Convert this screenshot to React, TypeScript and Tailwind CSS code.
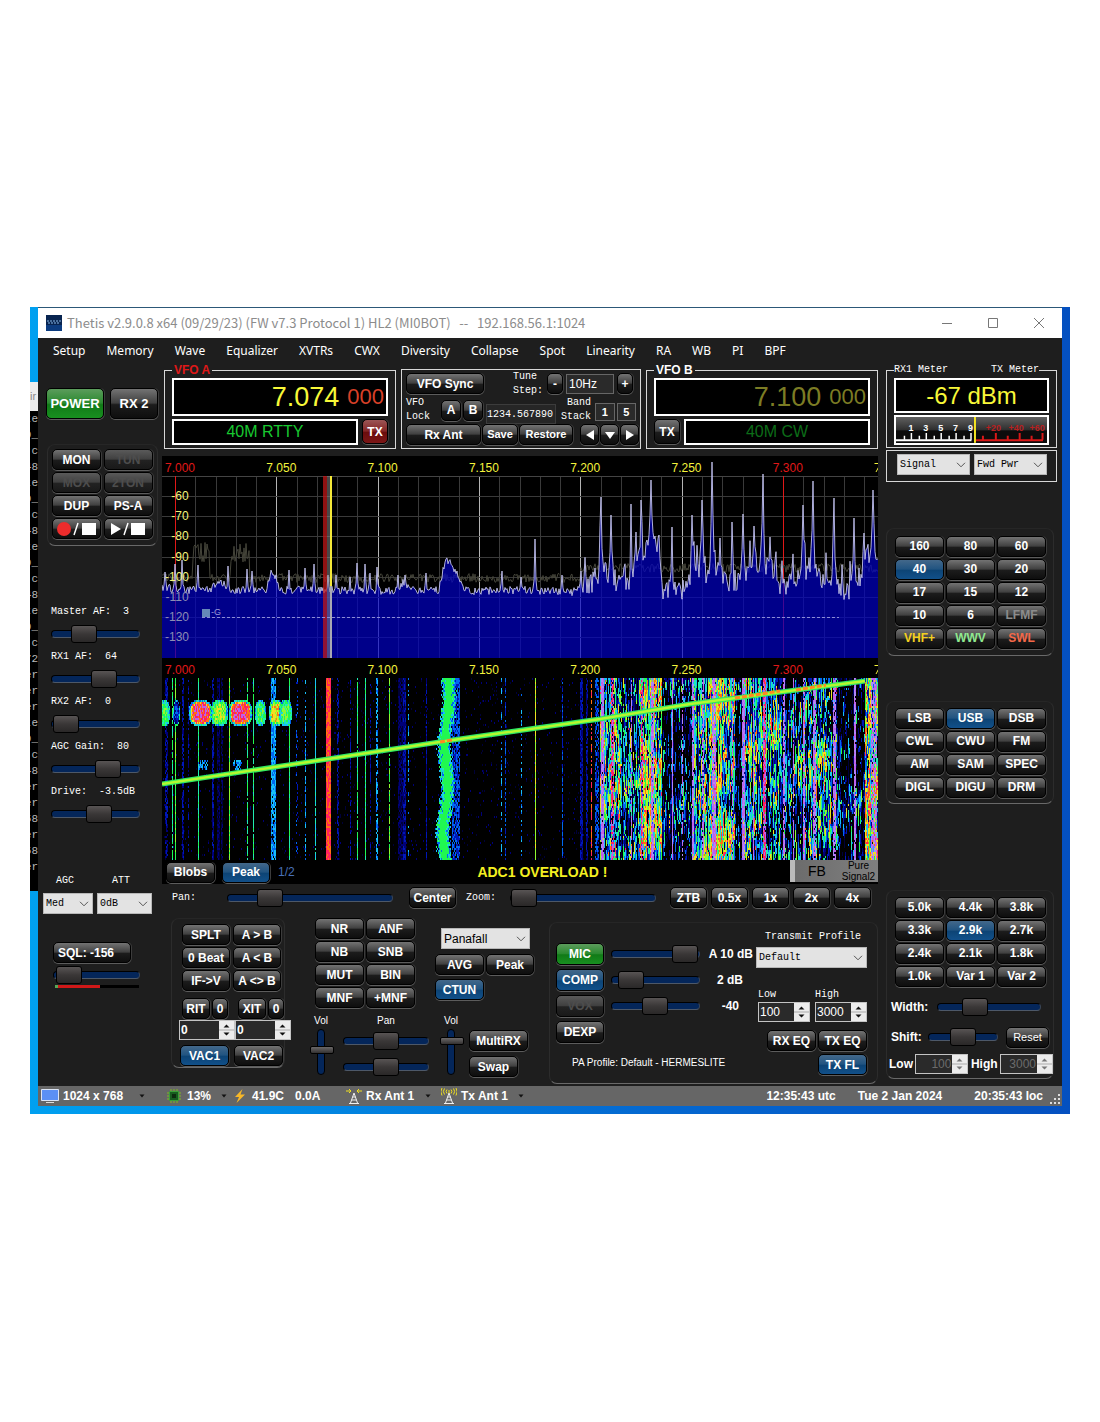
import { ReactNode } from 'react';
import { clsx } from 'clsx';

const tones = {
    dark: 'bg-[linear-gradient(#737373,#404040_48%,#1c1c1c_54%,#0e0e0e)] text-white',
    blue: 'bg-[linear-gradient(#43688a,#215481_48%,#0d4475_54%,#11508a)] text-white',
    green: 'bg-[linear-gradient(#5c9c5c,#2b8a30_48%,#117a17_54%,#189020)] text-white',
    red: 'bg-[linear-gradient(#9c5656,#842626_48%,#6b0d0d_54%,#7c1616)] text-white',
    off: 'bg-[linear-gradient(#5a5a5a,#404040_48%,#222222_54%,#191919)] text-[#4d4d4d]',
};

interface BtnProps {
    children: ReactNode;
    tone?: keyof typeof tones;
    className?: string;
    label?: string;
}

function Btn({ children, tone = 'dark', className = 'w-[49px]', label }: BtnProps) {
    return (
        <button
            type="button"
            aria-label={label}
            className={clsx(
                'flex h-[21px] shrink-0 items-center justify-center rounded-[5px] border border-black font-bold whitespace-nowrap shadow-[0_1px_0_#5c5c5c,1px_0_0_#3c3c3c]',
                tones[tone],
                className,
            )}
        >
            {children}
        </button>
    );
}

interface SliderProps {
    label: string;
    value: number;
    className?: string;
}

function Slider({ label, value, className = 'w-[89px]' }: SliderProps) {
    return (
        <input
            type="range"
            aria-label={label}
            defaultValue={value}
            className={clsx(
                'h-5 appearance-none bg-transparent [&::-webkit-slider-runnable-track]:h-2 [&::-webkit-slider-runnable-track]:rounded-full [&::-webkit-slider-runnable-track]:border [&::-webkit-slider-runnable-track]:border-t-black [&::-webkit-slider-runnable-track]:border-r-[#3a4454] [&::-webkit-slider-runnable-track]:border-b-[#4d5868] [&::-webkit-slider-runnable-track]:border-l-black [&::-webkit-slider-runnable-track]:bg-[#04265a]',
                '[&::-webkit-slider-thumb]:-mt-1.5 [&::-webkit-slider-thumb]:h-[18px] [&::-webkit-slider-thumb]:w-[26px] [&::-webkit-slider-thumb]:appearance-none [&::-webkit-slider-thumb]:rounded-[3px] [&::-webkit-slider-thumb]:border [&::-webkit-slider-thumb]:border-black [&::-webkit-slider-thumb]:bg-[linear-gradient(#585454,#3a3737_50%,#2a2828)]',
                className,
            )}
        />
    );
}

function VSlider({ label, value }: SliderProps) {
    return (
        <input
            type="range"
            aria-label={label}
            defaultValue={value}
            className="h-[46px] w-6 appearance-none bg-transparent [direction:rtl] [writing-mode:vertical-lr] [&::-webkit-slider-runnable-track]:w-2 [&::-webkit-slider-runnable-track]:rounded-full [&::-webkit-slider-runnable-track]:border [&::-webkit-slider-runnable-track]:border-black [&::-webkit-slider-runnable-track]:bg-[#04265a] [&::-webkit-slider-thumb]:-ml-2 [&::-webkit-slider-thumb]:h-2 [&::-webkit-slider-thumb]:w-6 [&::-webkit-slider-thumb]:appearance-none [&::-webkit-slider-thumb]:rounded-[2px] [&::-webkit-slider-thumb]:border [&::-webkit-slider-thumb]:border-black [&::-webkit-slider-thumb]:bg-[linear-gradient(#6b6868,#333131)]"
        />
    );
}

interface PickerProps {
    value: string;
    label?: string;
    id?: string;
    className?: string;
}

function Picker({ value, label, id, className }: PickerProps) {
    return (
        <div className={clsx('relative h-[21px]', className)}>
            <select
                id={id}
                aria-label={label}
                className="h-full w-full appearance-none border border-[#b8b8b8] bg-[#e3e3e3] pl-0.5 text-black"
            >
                <option>{value}</option>
            </select>
            <svg
                viewBox="0 0 10 6"
                className="pointer-events-none absolute top-2 right-1 h-1.5 w-2.5"
            >
                <path d="M1 .8 5 4.8 9 .8" fill="none" stroke="#555" />
            </svg>
        </div>
    );
}

interface SpinProps {
    label: string;
    value: string;
    className?: string;
    inputClass?: string;
    dim?: boolean;
}

function Spin({ label, value, className, inputClass, dim }: SpinProps) {
    return (
        <div className={clsx('flex h-5 border border-[#c4c4c4] bg-[#2a2a2a]', className)}>
            <input
                aria-label={label}
                defaultValue={value}
                className={clsx('w-full min-w-0 bg-transparent px-px', inputClass)}
            />
            <svg viewBox="0 0 15 18" className="h-full w-[15px] shrink-0 bg-[#ececec]">
                <path d="M0 9H15" stroke="#aaa" />
                <path
                    d="M4.500 6.500h6L7.500 3.500zM4.500 11.500h6L7.500 14.500z"
                    fill={dim ? '#777' : '#111'}
                />
            </svg>
        </div>
    );
}

function Panel({ children, className }: { children: ReactNode; className?: string }) {
    return (
        <div
            className={clsx(
                'rounded-lg border border-t-[#262626] border-r-[#2c2c2c] border-b-[#696969] border-l-[#2c2c2c]',
                className,
            )}
        >
            {children}
        </div>
    );
}

// ---- spectrum and waterfall -------------------------------------------------

function makeRandom(seed: number) {
    let s = seed;
    return () => {
        s = (s * 1664525 + 1013904223) % 4294967296;
        return s / 4294967296;
    };
}

function lerpTable(table: number[][], x: number) {
    for (let i = 1; i < table.length; i++) {
        const [x0, y0] = table[i - 1];
        const [x1, y1] = table[i];
        if (x <= x1) return y0 + ((y1 - y0) * (x - x0)) / (x1 - x0);
    }
    return table[table.length - 1][1];
}

// noise floor: x, y
const floor = [
    [0, 131], [20, 134], [48, 133], [53, 128], [62, 128], [66, 134], [104, 134], [108, 120],
    [110, 115], [113, 120], [119, 134], [236, 135], [240, 127], [248, 130], [254, 135], [277, 134],
    [281, 114], [284, 104], [287, 106], [294, 116], [300, 130], [308, 135], [370, 134], [410, 136],
    [420, 130], [432, 126], [438, 112], [448, 118], [458, 128], [472, 120], [480, 104], [490, 98],
    [498, 108], [501, 134], [526, 134], [532, 112], [546, 118], [552, 100], [556, 118], [572, 132],
    [580, 118], [600, 106], [614, 116], [621, 135], [634, 120], [650, 108], [660, 124], [674, 130],
    [684, 136], [698, 120], [704, 98], [716, 96],
];

// carriers: x, top y, width
const carriers = [
    [3, 116, 1], [13, 108, 1], [20, 104, 1], [36, 109, 1], [66, 110, 1], [85, 113, 1], [90, 115, 1],
    [127, 114, 1], [143, 112, 1], [152, 108, 1], [166, 119, 1], [174, 119, 1], [188, 121, 1],
    [195, 107, 1], [203, 108, 1], [208, 117, 1], [215, 111, 1], [236, 119, 1], [243, 119, 1],
    [264, 117, 1], [340, 115, 1], [359, 121, 1], [373, 83, 1], [400, 119, 1], [419, 115, 1],
    [433, 112, 1], [439, 41, 2], [449, 59, 2], [469, 48, 1], [474, 76, 2], [479, 44, 2],
    [485, 84, 3], [489, 24, 3], [493, 80, 3], [497, 79, 2], [510, 71, 1], [530, 59, 2], [540, 44, 2],
    [550, 6, 2], [558, 82, 2], [570, 66, 1], [581, 58, 2], [592, 70, 2], [601, 18, 2], [608, 81, 2],
    [641, 49, 2], [651, 25, 2], [672, 42, 2], [692, 62, 2], [702, 77, 1], [711, 34, 2],
];

function spectrumTrace() {
    const rnd = makeRandom(7);
    let d = '';
    for (let x = 0; x <= 716; x++) {
        const busy = x > 418;
        let y = lerpTable(floor, x) + (rnd() - 0.5) * (busy ? 22 : 8);
        if (busy && rnd() < 0.08) y -= 18;
        for (const [cx, top, w] of carriers) {
            const dist = Math.abs(x - cx);
            if (dist <= w) y = Math.min(y, top + Math.sqrt(dist / (w + 0.5)) * (y - top));
        }
        d += `${x ? 'L' : 'M'}${x} ${y.toFixed(1)}`;
    }
    return d;
}

function peakTrace() {
    const rnd = makeRandom(31);
    let d = '';
    for (let x = 0; x <= 716; x++) {
        let y = x > 418 ? 112 : 122;
        if ((x > 30 && x < 48) || (x > 68 && x < 88)) y = 96;
        d += `${x ? 'L' : 'M'}${x} ${(y + (rnd() - 0.5) * (y < 100 ? 22 : 9)).toFixed(1)}`;
    }
    return d;
}

const palette = [
    '#000038', '#000078', '#0018b8', '#0068f0', '#18c0f8', '#20ecb0', '#20f850',
    '#90f830', '#f0e020', '#ff7010', '#ff2060', '#c060e8', '#b088f8',
];

// steady carriers on the waterfall: x, width, level, steadiness
const streaks = [
    [3, 3, 2, 0.7], [10, 1, 6, 0.8], [13, 1, 7, 1], [20, 2, 2, 0.8], [26, 1, 2, 0.5], [36, 1, 6, 1],
    [50, 2, 2, 0.8], [55, 3, 1, 0.9], [59, 2, 1, 0.8], [67, 1, 7, 1], [85, 1, 6, 0.9], [91, 1, 6, 0.9],
    [109, 5, 4, 0.9], [127, 1, 6, 1], [134, 2, 3, 0.3], [143, 1, 4, 0.7], [153, 1, 5, 0.9],
    [164, 5, 10, 1], [175, 2, 2, 0.7], [188, 1, 2, 0.6], [195, 1, 6, 0.9], [203, 1, 6, 1],
    [208, 1, 2, 0.6], [214, 2, 4, 0.7], [227, 1, 7, 0.9], [236, 8, 1, 0.9], [241, 3, 2, 0.8],
    [246, 1, 4, 0.4], [264, 1, 2, 0.9], [290, 8, 3, 0.8], [339, 1, 4, 0.5], [343, 1, 3, 0.7],
    [359, 1, 4, 0.4], [373, 1, 8, 1], [400, 1, 3, 0.8], [418, 3, 2, 0.9], [424, 2, 2, 0.7],
    [429, 1, 10, 0.7], [433, 4, 3, 0.7], [439, 3, 12, 0.9], [449, 3, 11, 0.7], [469, 1, 12, 0.7],
    [479, 2, 11, 0.7], [489, 3, 12, 0.8], [510, 1, 12, 1], [520, 1, 12, 0.7], [530, 2, 12, 0.9],
    [540, 2, 12, 0.7], [550, 4, 12, 0.8], [570, 1, 12, 0.8], [580, 3, 12, 0.9], [591, 1, 12, 0.8],
    [601, 3, 11, 0.9], [621, 2, 12, 0.8], [631, 1, 12, 0.8], [641, 2, 12, 0.7], [651, 3, 12, 0.7],
    [671, 3, 12, 0.8], [692, 2, 12, 0.9], [709, 6, 12, 0.6],
];

// busy stretches of the band: from, to, level
const zones = [
    [438, 458, 5], [458, 478, 3], [478, 500, 7], [500, 530, 0], [530, 548, 5], [548, 562, 8],
    [562, 573, 5], [573, 580, 0], [580, 600, 5], [600, 622, 4], [622, 640, 2], [640, 664, 4],
    [664, 676, 3], [676, 703, 0], [703, 716, 8],
];

// keyed bursts near the top: centre, half width, level
const blobs = [
    [1, 6, 8], [14, 3, 4], [38, 11, 12], [57, 8, 9], [78, 11, 12], [98, 5, 8], [114, 7, 10],
    [123, 6, 8],
];

function waterfallPaths() {
    const rnd = makeRandom(99);
    const paths = palette.map(() => '');
    const rowHeight = 2;
    const drift = Array.from({ length: 720 }, () => 0);
    for (let y = 0; y < 182; y += rowHeight) {
        const wander = Math.sin(y / 14) * 2;
        for (let x = 0; x < 716; x++) {
            let level = -1;
            const zone = zones.find(([a, b]) => x >= a && x < b);
            if (zone) {
                if (rnd() < 0.35) drift[x] = (rnd() + rnd() - 1) * 8;
                const swell = Math.sin(y / 11 + x / 13) * 1.2 + Math.sin(y / 26 - x / 31) * 1.2;
                level = zone[2] + drift[x] + swell - (x % 5 === 0 ? 4 : 0);
                if (level > 9) level = 8 + rnd() * 2.5;
            } else if (rnd() < 0.03 && x < 440) {
                level = rnd() * 2;
            }
            for (const [sx, w, power, steady] of streaks) {
                if (x >= sx && x < sx + w && rnd() < steady) {
                    level = power + (rnd() - 0.5) * (power > 11 ? 0.8 : 2);
                }
            }
            // slow wide signal with a ragged edge
            const off = Math.abs(x - 285 + y / 60 - wander) + rnd() * 3;
            if (off < 8) level = off < 5 ? 6 + rnd() * 0.8 : 3 + rnd() * 4;
            for (const [cx, half, power] of blobs) {
                const reach = ((x - cx) / half) ** 4 + ((y - 34) / 12) ** 4;
                if (reach < 1.1) {
                    level = reach > 0.55 ? 3 + rnd() * 4 : power - 3 * reach - rnd() * 2.5;
                }
            }
            if (y >= 81 && y < 92 && ((x > 35 && x < 46) || (x > 70 && x < 80)) && rnd() < 0.6) {
                level = 3 + rnd() * 2;
            }
            const index = Math.floor(level);
            if (index >= 0) paths[Math.min(index, 12)] += `M${x} ${y}h1v${rowHeight}h-1z`;
        }
    }
    return paths;
}

const trace = spectrumTrace();
const peaks = peakTrace();
const waterfall = waterfallPaths();
const marks = ['7.000', '7.050', '7.100', '7.150', '7.200', '7.250', '7.300'];
const levels = [-60, -70, -80, -90, -100, -110, -120, -130];

function FrequencyScale() {
    return (
        <g fontSize="12" fill="#f4f43c">
            {marks.map((mark, i) => (
                <text
                    key={mark}
                    x={18 + i * 101.3}
                    y="16"
                    textAnchor="middle"
                    fill={i === 0 || i === 6 ? '#e01818' : undefined}
                >
                    {mark}
                </text>
            ))}
            <path d="M712.500 7.500h6L714 16" fill="none" stroke="#f4f43c" />
        </g>
    );
}

function Panadapter() {
    return (
        <svg viewBox="0 0 716 404" className="block w-full bg-black">
            <FrequencyScale />
            <svg y="20" width="716" height="182" overflow="visible">
                <g shapeRendering="crispEdges">
                    {Array.from({ length: 36 }, (_, i) => (
                        <path
                            key={i}
                            d={`M${Math.round(13 + i * 20.27)} 0V182`}
                            stroke={i % 5 === 0 ? '#b4b4b4' : '#3a3a3a'}
                        />
                    ))}
                    {levels.map((level, i) => (
                        <path key={level} d={`M0 ${Math.round(20 + i * 20.2)}H716`} stroke="#3a3a3a" />
                    ))}
                    <path d="M0 0H716" stroke="#444" />
                    <path d="M13 0V182M621 0V182" stroke="#e01818" />
                </g>
                <g transform="translate(0 -20)">
                    <path d={peaks} fill="none" stroke="#45453a" />
                    <path d={`${trace}V202H0Z`} fill="#0000c4" fillOpacity="0.7" />
                    <path d={trace} fill="none" stroke="#c4c4ec" strokeWidth="0.9" />
                </g>
                <path d="M161 0h4v182h-4z" fill="#c01818" fillOpacity="0.75" />
                <path d="M165 0h3v182h-3z" fill="#909090" fillOpacity="0.5" />
                <path d="M168 0h2v110h-2z" fill="#f4e838" />
                <path d="M168 110h2v72h-2z" fill="#a8a8b4" />
                <path d="M40 141.500H677" stroke="#8c8cd4" strokeDasharray="3 2" />
                <path d="M40 133h8v8h-8z" fill="#6688b8" />
                <text x="49" y="139" fontSize="9" fill="#9c9cd8">-G</text>
                <g fontSize="12" textAnchor="middle">
                    {levels.map((level, i) => (
                        <text
                            key={level}
                            x={i < 4 ? 18 : 15}
                            y={24 + i * 20.2}
                            fill={i < 5 ? '#f4f47c' : '#8c8cb4'}
                        >
                            {level}
                        </text>
                    ))}
                </g>
            </svg>
            <g transform="translate(0 202)">
                <FrequencyScale />
            </g>
            <svg y="222" width="716" height="182">
                <g shapeRendering="crispEdges">
                    {waterfall.map((d, i) => (
                        <path key={i} d={d} fill={palette[i]} />
                    ))}
                </g>
                <path d="M0 106 166 81 284 63 438 41 528 26 703 3" fill="none" stroke="#30e860" strokeWidth="5" />
                <path d="M0 106 166 81 284 63 438 41 528 26 703 3" fill="none" stroke="#b4f830" strokeWidth="2.500" />
                <path d="M278 64l12-2M573 20l45-7M634 12l30-5" stroke="#ff8820" strokeWidth="3" strokeDasharray="5 2" />
            </svg>
        </svg>
    );
}

// ---- top row ----------------------------------------------------------------

interface VfoProps {
    name: string;
    mhz: string;
    band: string;
    active?: boolean;
}

function Vfo({ name, mhz, band, active }: VfoProps) {
    const tx = (
        <Btn tone={active ? 'red' : 'dark'} className="h-[25px] w-[26px]">
            TX
        </Btn>
    );
    return (
        <fieldset className="min-w-0 flex-1 border border-[#d8d8d8] px-[7px] pb-1">
            <legend className={clsx('px-0.5 leading-3 font-bold', active ? 'text-[#e01818]' : 'text-white')}>
                {name}
            </legend>
            <div className="mt-0.5 flex h-[38px] items-center justify-end gap-2 border-2 border-white bg-black pr-0.5">
                <span className={clsx('text-[27px] leading-9', active ? 'text-[#f8f838]' : 'text-[#7c7c24]')}>
                    {mhz}
                </span>
                <span className={clsx('text-[22px] leading-9', active ? 'text-[#d84028]' : 'text-[#7c7c24]')}>
                    000
                </span>
            </div>
            <div className="mt-[3px] flex gap-1">
                {!active && tx}
                <div
                    className={clsx(
                        'h-[26px] flex-1 border-2 border-white bg-black text-center text-base leading-[22px]',
                        active ? 'text-[#18c830]' : 'text-[#0c6c18]',
                    )}
                >
                    {band}
                </div>
                {active && tx}
            </div>
        </fieldset>
    );
}

function TuneBox() {
    return (
        <div className="mt-[5px] w-60 border border-[#d8d8d8] px-1 pt-px">
            <div className="flex h-[25px] items-center">
                <Btn className="w-[78px]">VFO Sync</Btn>
                <label htmlFor="step" className="mr-1 ml-[29px] w-[30px] font-mono text-[10px] leading-[14px]">
                    Tune Step:
                </label>
                <Btn className="h-[17px] w-4">-</Btn>
                <input
                    id="step"
                    defaultValue="10Hz"
                    className="mx-[3px] h-5 w-12 border border-[#666] bg-[#2a2a2a] pl-0.5"
                />
                <Btn className="h-[17px] w-4">+</Btn>
            </div>
            <div className="flex h-7 items-center">
                <span className="mr-1.5 w-[30px] font-mono text-[10px] leading-[14px]">
                    VFO Lock
                </span>
                <Btn className="mr-0.5 w-5">A</Btn>
                <Btn className="w-5">B</Btn>
                <input
                    aria-label="Saved frequency"
                    defaultValue="1234.567890"
                    className="mt-2 ml-[3px] h-5 w-[70px] border border-[#3c3c3c] bg-[#262626] font-mono text-[10px]"
                />
                <span className="mx-1 w-8 text-right font-mono text-[10px] leading-[14px]">
                    Band Stack
                </span>
                <span className="mt-1 h-[18px] w-5 border border-[#666] bg-[#2a2a2a] text-center text-[11px] leading-4 font-bold">
                    1
                </span>
                <span className="mt-1 ml-0.5 h-[18px] w-5 border border-[#666] bg-[#2a2a2a] text-center text-[11px] leading-4 font-bold">
                    5
                </span>
            </div>
            <div className="flex items-center gap-px">
                <Btn className="w-[75px]">Rx Ant</Btn>
                <Btn className="w-9 text-[11px]">Save</Btn>
                <Btn className="mr-1.5 w-[54px] text-[11px]">Restore</Btn>
                {['M12 3v10L4 8z', 'M3 5h10l-5 7z', 'M4 3v10l8-5z'].map((d, i) => (
                    <Btn key={d} className="h-[18px] w-[19px]" label={['Previous', 'Down', 'Next'][i]}>
                        <svg viewBox="0 0 16 16" className="h-4 w-4">
                            <path d={d} fill="#fff" />
                        </svg>
                    </Btn>
                ))}
            </div>
        </div>
    );
}

// ---- columns ----------------------------------------------------------------

const gains = [
    { name: 'Master AF:  3', value: 31 },
    { name: 'RX1 AF:  64', value: 64 },
    { name: 'RX2 AF:  0', value: 2 },
    { name: 'AGC Gain:  80', value: 70 },
    { name: 'Drive:  -3.5dB', value: 55 },
];

function LeftColumn() {
    return (
        <div className="w-[124px] shrink-0">
            <div className="mt-6 ml-2 flex gap-1.5">
                <Btn tone="green" className="h-[31px] w-[58px] text-[13px]">POWER</Btn>
                <Btn className="h-[31px] w-12 text-[13px]">RX 2</Btn>
            </div>
            <Panel className="mt-[25px] ml-[9px] grid w-[111px] grid-cols-2 gap-0.5 px-1 pt-1 pb-1.5">
                <Btn>MON</Btn>
                <Btn tone="off">TUN</Btn>
                <Btn tone="off">MOX</Btn>
                <Btn tone="off">2TON</Btn>
                <Btn>DUP</Btn>
                <Btn>PS-A</Btn>
                <Btn label="Record">
                    <svg viewBox="0 0 42 16" className="w-[42px]">
                        <circle cx="8" cy="8" r="7" fill="#ee2c2c" />
                        <path d="M18 14 22 2" stroke="#fff" strokeWidth="1.500" />
                        <path d="M26 2h14v12H26z" fill="#fff" />
                    </svg>
                </Btn>
                <Btn label="Play">
                    <svg viewBox="0 0 42 16" className="w-[42px]">
                        <path d="M4 2v12l10-6zM24 2h14v12H24z" fill="#fff" />
                        <path d="M17 14 21 2" stroke="#fff" strokeWidth="1.500" />
                    </svg>
                </Btn>
            </Panel>
            <div className="mt-[60px] ml-[13px]">
                {gains.map((gain) => (
                    <div key={gain.name} className="flex h-[45px] flex-col">
                        <span className="mb-1.5 font-mono text-[10px] leading-3 whitespace-pre">
                            {gain.name}
                        </span>
                        <Slider label={gain.name} value={gain.value} />
                    </div>
                ))}
            </div>
            <div className="mt-[42px] ml-[5px] flex gap-1 font-mono text-[10px]">
                <div>
                    <label htmlFor="agc" className="mb-1 block pl-[13px] leading-4">AGC</label>
                    <Picker id="agc" value="Med" className="w-[50px]" />
                </div>
                <div>
                    <label htmlFor="att" className="mb-1 block pl-[15px] leading-4">ATT</label>
                    <Picker id="att" value="0dB" className="w-[55px]" />
                </div>
            </div>
            <div className="mt-7 ml-[15px]">
                <Btn className="w-[78px] pr-3">SQL: -156</Btn>
                <Slider label="Squelch" value={3} className="mt-0.5 block w-[87px]" />
                <div className="ml-0.5 flex h-[3px] w-[84px] bg-black">
                    <div className="w-[3px] bg-[#58a858]" />
                    <div className="w-[42px] bg-[#d01818]" />
                </div>
            </div>
        </div>
    );
}

function MeterScale() {
    return (
        <svg viewBox="0 0 152 26" className="block w-full bg-[linear-gradient(#606060,#303030_48%,#0c0c0c_54%,#0c0c0c)]">
            <path d="M0 23.500H76" stroke="#fff" strokeWidth="2" />
            <path d="M8.500 19v4M15.500 16v7M23.500 19v4M30.500 16v7M38.500 19v4M45.500 16v7M53.500 19v4M60.500 16v7M68.500 19v4M75.500 16v7" stroke="#fff" strokeWidth="1.500" />
            <path d="M80 23.500H148M87.500 19v4M100.500 16v7M112.500 19v4M124.500 16v7M136.500 19v4M147.500 16v7" fill="none" stroke="#d81818" strokeWidth="2" />
            <g fontSize="9" fontWeight="bold" fill="#fff" textAnchor="middle">
                <text x="15" y="14">1</text>
                <text x="30" y="14">3</text>
                <text x="45" y="14">5</text>
                <text x="60" y="14">7</text>
                <text x="75" y="14">9</text>
                <g fill="#b82020">
                    <text x="98" y="14">+20</text>
                    <text x="121" y="14">+40</text>
                    <text x="142" y="14">+60</text>
                </g>
            </g>
            <path d="M79.500 0V26" stroke="#f4e420" strokeWidth="2" />
        </svg>
    );
}

const bands = ['160', '80', '60', '40', '30', '20', '17', '15', '12', '10', '6'];
const modes = ['LSB', 'USB', 'DSB', 'CWL', 'CWU', 'FM', 'AM', 'SAM', 'SPEC', 'DIGL', 'DIGU', 'DRM'];
const filters = ['5.0k', '4.4k', '3.8k', '3.3k', '2.9k', '2.7k', '2.4k', '2.1k', '1.8k', '1.0k', 'Var 1', 'Var 2'];

function RightColumn() {
    return (
        <div className="w-[184px] shrink-0 pr-[5px] pl-2">
            <fieldset className="border border-[#d8d8d8] px-[7px] pb-0.5">
                <legend className="flex w-[145px] justify-between font-mono text-[10px] leading-3">
                    <span>RX1 Meter</span>
                    <span>TX Meter</span>
                </legend>
                <div className="mt-0.5 h-[35px] border-2 border-white bg-black text-center text-2xl leading-8 text-[#f8f838]">
                    -67 dBm
                </div>
                <div className="mt-0.5 border-2 border-white">
                    <MeterScale />
                </div>
            </fieldset>
            <div className="mt-0.5 flex h-8 gap-1 border border-[#d8d8d8] pt-[3px] pl-2.5 font-mono text-[10px]">
                <Picker label="Receive meter" value="Signal" className="w-[73px]" />
                <Picker label="Transmit meter" value="Fwd Pwr" className="w-[73px]" />
            </div>
            <Panel className="mt-[46px] grid w-[168px] grid-cols-[49px_49px_49px] gap-0.5 px-2 pt-[7px] pb-1.5">
                {bands.map((band) => (
                    <Btn key={band} tone={band === '40' ? 'blue' : 'dark'}>{band}</Btn>
                ))}
                <Btn><span className="text-[#8c8c8c]">LFMF</span></Btn>
                <Btn><span className="text-[#f4d020]">VHF+</span></Btn>
                <Btn><span className="text-[#90e890]">WWV</span></Btn>
                <Btn><span className="text-[#f46848]">SWL</span></Btn>
            </Panel>
            <Panel className="mt-[45px] grid w-[168px] grid-cols-[49px_49px_49px] gap-0.5 px-2 pt-1.5 pb-[5px]">
                {modes.map((mode) => (
                    <Btn key={mode} tone={mode === 'USB' ? 'blue' : 'dark'}>{mode}</Btn>
                ))}
            </Panel>
            <Panel className="mt-[86px] w-[168px] px-1 pt-1.5 pb-1">
                <div className="grid grid-cols-[49px_49px_49px] gap-0.5 px-1">
                    {filters.map((filter) => (
                        <Btn key={filter} tone={filter === '2.9k' ? 'blue' : 'dark'}>{filter}</Btn>
                    ))}
                </div>
                <div className="mt-2.5 flex items-center font-bold">
                    <span className="w-[46px]">Width:</span>
                    <Slider label="Width" value={31} className="w-[104px]" />
                </div>
                <div className="mt-2.5 flex items-center font-bold">
                    <span className="w-[38px]">Shift:</span>
                    <Slider label="Shift" value={50} className="mr-2 w-[70px]" />
                    <Btn className="h-[18px] w-[43px] text-[11px] font-normal">Reset</Btn>
                </div>
                <div className="-mx-1 mt-1.5 flex items-center justify-between pl-0.5 font-bold">
                    <span>Low</span>
                    <Spin label="Filter low" value="100" className="w-[53px]" inputClass="text-right font-normal text-[#6c6c6c]" dim />
                    <span>High</span>
                    <Spin label="Filter high" value="3000" className="w-[53px]" inputClass="text-right font-normal text-[#6c6c6c]" dim />
                </div>
            </Panel>
        </div>
    );
}

// ---- lower controls ---------------------------------------------------------

function SplitPanel() {
    return (
        <div className="mt-[7px] w-[126px] shrink-0">
            <Panel className="flex h-[150px] w-[114px] flex-col px-2.5 pt-[5px]">
                <div className="grid grid-cols-[48px_48px] gap-x-[3px] gap-y-0.5">
                    {['SPLT', 'A > B', '0 Beat', 'A < B', 'IF->V', 'A <> B'].map((name) => (
                        <Btn key={name} className="w-12">{name}</Btn>
                    ))}
                </div>
                <div className="mt-[7px] flex gap-0.5">
                    <Btn className="h-[18px] w-7">RIT</Btn>
                    <Btn className="mr-2 h-[18px] w-4">0</Btn>
                    <Btn className="h-[18px] w-7">XIT</Btn>
                    <Btn className="h-[18px] w-4">0</Btn>
                </div>
                <div className="-mx-[3px] mt-px flex w-[112px]">
                    <Spin label="RIT" value="0" className="w-14" inputClass="font-bold" />
                    <Spin label="XIT" value="0" className="w-14" inputClass="font-bold" />
                </div>
                <div className="-mx-0.5 mt-[5px] flex gap-[5px]">
                    <Btn tone="blue">VAC1</Btn>
                    <Btn>VAC2</Btn>
                </div>
            </Panel>
        </div>
    );
}

function DspPanel() {
    return (
        <div className="mt-[7px] ml-3 w-[232px] shrink-0">
            <div className="flex gap-5 pl-1.5">
                <div className="grid grid-cols-[49px_49px] gap-0.5">
                    {['NR', 'ANF', 'NB', 'SNB', 'MUT', 'BIN', 'MNF', '+MNF'].map((name) => (
                        <Btn key={name}>{name}</Btn>
                    ))}
                </div>
                <div className="pt-2.5">
                    <Picker label="Display mode" value="Panafall" className="ml-1.5 w-[89px]" />
                    <div className="mt-[5px] grid grid-cols-[49px_47px] gap-x-0.5 gap-y-1">
                        <Btn>AVG</Btn>
                        <Btn className="w-12">Peak</Btn>
                        <Btn tone="blue">CTUN</Btn>
                    </div>
                </div>
            </div>
            <div className="mt-[7px] flex">
                <div className="flex w-6 flex-col items-center gap-0.5 text-[10px] leading-3">
                    Vol
                    <VSlider label="Receiver one volume" value={55} />
                </div>
                <div className="ml-2.5 flex w-[86px] flex-col text-center text-[10px] leading-3">
                    <span>Pan</span>
                    <Slider label="Main pan" value={50} className="mt-1 w-[86px]" />
                    <Slider label="Sub pan" value={50} className="mt-1.5 w-[86px]" />
                </div>
                <div className="ml-2.5 flex w-6 flex-col items-center gap-0.5 text-[10px] leading-3">
                    Vol
                    <VSlider label="Receiver two volume" value={80} />
                </div>
                <div className="mt-[15px] ml-1.5 flex flex-col gap-[5px]">
                    <Btn className="w-[59px]">MultiRX</Btn>
                    <Btn>Swap</Btn>
                </div>
            </div>
        </div>
    );
}

function TransmitPanel() {
    return (
        <Panel className="mt-[11px] mb-0.5 ml-2 flex min-w-0 flex-1 justify-between pt-5 pr-2.5 pl-1.5">
            <div>
                <div className="flex items-center gap-[7px]">
                    <Btn tone="green" className="h-[22px] w-12">MIC</Btn>
                    <Slider label="Mic gain" value={98} />
                    <span className="w-[46px] text-right font-bold whitespace-nowrap">A 10 dB</span>
                </div>
                <div className="mt-1 flex items-center gap-[7px]">
                    <Btn tone="blue" className="h-[22px] w-12">COMP</Btn>
                    <Slider label="Compression" value={10} />
                    <span className="w-9 text-right font-bold">2 dB</span>
                </div>
                <div className="mt-1 flex items-center gap-[7px]">
                    <Btn tone="off" className="h-[22px] w-12">VOX</Btn>
                    <Slider label="Vox level" value={49} />
                    <span className="w-8 text-right font-bold">-40</span>
                </div>
                <Btn className="mt-1 h-[22px] w-12">DEXP</Btn>
                <p className="mt-3.5 ml-4 text-[10px] leading-3 whitespace-nowrap">
                    PA Profile: Default - HERMESLITE
                </p>
            </div>
            <div className="-mt-3.5 flex flex-col items-end">
                <label htmlFor="profile" className="w-[102px] font-mono text-[10px] leading-4 whitespace-nowrap">
                    Transmit Profile
                </label>
                <div className="mt-0.5 w-[111px] font-mono text-[10px]">
                    <Picker id="profile" value="Default" />
                </div>
                <div className="mt-5 flex gap-[5px]">
                    <div className="w-[52px] font-mono text-[10px] leading-[14px]">
                        Low
                        <Spin label="Transmit low" value="100" className="font-sans text-xs" />
                    </div>
                    <div className="w-[52px] font-mono text-[10px] leading-[14px]">
                        High
                        <Spin label="Transmit high" value="3000" className="font-sans text-xs" />
                    </div>
                </div>
                <div className="mt-2 grid grid-cols-[49px_49px] gap-x-0.5 gap-y-[3px]">
                    <Btn>RX EQ</Btn>
                    <Btn>TX EQ</Btn>
                    <Btn tone="blue" className="col-start-2 w-[49px]">TX FL</Btn>
                </div>
            </div>
        </Panel>
    );
}

// ---- status bar -------------------------------------------------------------

function Caret() {
    return (
        <svg viewBox="0 0 6 4" className="h-1 w-1.5 shrink-0">
            <path d="M.5.5h5L3 3.500z" fill="#111" />
        </svg>
    );
}

function Antenna({ d }: { d: string }) {
    return (
        <svg viewBox="0 0 16 16" className="h-4 w-4 shrink-0" fill="none">
            <path d="M8 5 4.500 15M8 5l3.500 10M6.500 9h3M5.500 12h5M3 15.500h10" stroke="#f0f0f0" />
            <path d={d} stroke="#f0e020" />
        </svg>
    );
}

function StatusBar() {
    return (
        <footer className="flex h-5 items-center bg-[#666] pl-[3px] font-bold whitespace-nowrap">
            <svg viewBox="0 0 18 14" className="mr-1 h-3.5 w-[18px]">
                <path d="M.5.5h17v11H.5z" fill="#5c90f4" stroke="#dce4f4" />
                <path d="M5 13.500h8" stroke="#ddd" />
            </svg>
            <span className="w-[76px]">1024 x 768</span>
            <Caret />
            <svg viewBox="0 0 14 14" className="mr-1.5 ml-[22px] h-3.5 w-3.5">
                <path d="M7 0V14M0 7H14M4 0V14M10 0V14M0 4H14M0 10H14" stroke="#80b820" />
                <path d="M2.500 2.500h9v9h-9z" fill="#185c20" stroke="#38a038" />
                <path d="M5 5h4v4H5z" fill="#0c2c10" />
            </svg>
            <span className="w-[34px]">13%</span>
            <Caret />
            <svg viewBox="0 0 12 14" className="mr-1.5 ml-[7px] h-3.5 w-3">
                <path d="M8.500 0 1 8h4L2.500 14 11 5.500H6.500z" fill="#f8b828" />
            </svg>
            <span className="w-[43px]">41.9C</span>
            <span className="w-[51px]">0.0A</span>
            <Antenna d="M0 3h5M3 1l2 2-2 2M16 3h-5M13 1l-2 2 2 2" />
            <span className="ml-1 w-[59px]">Rx Ant 1</span>
            <Caret />
            <span className="w-2.5" />
            <Antenna d="M6 1.500a3 3 0 0 0 0 4M10 1.500a3 3 0 0 1 0 4M3.500.5a5 5 0 0 0 0 6M12.500.5a5 5 0 0 1 0 6M1 0a7 7 0 0 0 0 7.500M15 0a7 7 0 0 1 0 7.500M8 2v3" />
            <span className="ml-1 w-[57px]">Tx Ant 1</span>
            <Caret />
            <span className="mr-[22px] ml-auto">12:35:43 utc</span>
            <span className="mr-8">Tue 2 Jan 2024</span>
            <span className="mr-1.5">20:35:43 loc</span>
            <svg viewBox="0 0 12 12" className="mt-1.5 mr-px h-3 w-3">
                <path d="M9 1h2v2H9zM9 5h2v2H9zM5 5h2v2H5zM9 9h2v2H9zM5 9h2v2H5zM1 9h2v2H1z" fill="#ddd" />
            </svg>
        </footer>
    );
}

const consoleLines = [
    'te', '0_', 'c', '48', 'te', '0_', 'c', '48', 'te', '0_', 'c', '48', 'te', '0_', 'c', '72',
    'er', 'er', 'er', 'te', '0_', 'c', '48', 'er', 'er', '58', 'er', '58', 'er', '',
];

// the edge of the console that shows from behind
function BackgroundWindow() {
    return (
        <div className="w-2 shrink-0 pt-[75px]" aria-hidden="true">
            <div className="h-[29px] overflow-hidden bg-[#ececec] text-[11px] leading-[29px] text-[#888]">ir</div>
            <div className="bg-black font-mono text-[11px] text-[#b8b8b8]">
                {consoleLines.map((line, i) => (
                    <div key={i} className="flex h-4 justify-end overflow-hidden leading-4">
                        {line}
                    </div>
                ))}
            </div>
        </div>
    );
}

const menu = [
    'Setup', 'Memory', 'Wave', 'Equalizer', 'XVTRs', 'CWX', 'Diversity', 'Collapse', 'Spot',
    'Linearity', 'RA', 'WB', 'PI', 'BPF',
];

export default function App() {
    return (
        <div className="min-h-screen bg-white px-[30px] pt-[307px] pb-10 font-sans text-xs text-white [--font-mono:'Liberation_Mono',monospace] [--font-sans:'Liberation_Sans',Arial,sans-serif]">
            <div className="flex bg-[linear-gradient(90deg,#00a0f0,#0468d0_60%,#0450c0)] pb-2">
                <BackgroundWindow />
                <div className="mr-2 min-w-0 flex-1 border-t border-[#2c5878] bg-[#1e1e1e]">
                    <header className="flex h-[30px] items-center bg-white pr-[17px] pl-2 text-[#8c8c8c]">
                        <svg viewBox="0 0 16 16" className="mr-[5px] h-4 w-4">
                            <path d="M0 0h16v16H0z" fill="#082450" />
                            <path d="M0 10h16v6H0z" fill="#0c3c80" />
                            <path d="M1 6h14M2 8h12" stroke="#88b8e8" strokeDasharray="2 1" />
                        </svg>
                        <h1 className="font-['Noto_Sans_CJK_SC',sans-serif] text-[13px] whitespace-pre">
                            Thetis v2.9.0.8 x64 (09/29/23) (FW v7.3 Protocol 1) HL2 (MI0BOT)   --   192.168.56.1:1024
                        </h1>
                        <div className="ml-auto flex gap-[34px]">
                            {['M1 6.500h10', 'M1.500 1.500h9v9h-9z', 'M1 1l10 10M11 1 1 11'].map((d, i) => (
                                <button key={d} type="button" aria-label={['Minimize', 'Maximize', 'Close'][i]}>
                                    <svg viewBox="0 0 12 12" className="h-3 w-3">
                                        <path d={d} fill="none" stroke="#777" />
                                    </svg>
                                </button>
                            ))}
                        </div>
                    </header>
                    <nav className="flex h-[26px] items-center gap-[21px] pl-[15px] font-['Noto_Sans',sans-serif]">
                        {menu.map((item) => (
                            <a key={item} href="#">{item}</a>
                        ))}
                    </nav>
                    <div className="flex">
                        <LeftColumn />
                        <main className="min-w-0 flex-1">
                            <div className="flex h-[92px] gap-[5px] pb-[7px] pl-0.5">
                                <Vfo name="VFO A" mhz="7.074" band="40M RTTY" active />
                                <TuneBox />
                                <Vfo name="VFO B" mhz="7.100" band="40M CW" />
                            </div>
                            <Panadapter />
                            <div className="flex h-6 items-center bg-black pl-1">
                                <Btn>Blobs</Btn>
                                <Btn tone="blue" className="ml-[7px] w-12">Peak</Btn>
                                <span className="ml-2 text-[#4870b8]">1/2</span>
                                <strong className="mx-auto text-sm text-[#f4f020]">ADC1 OVERLOAD !</strong>
                                <div className="flex h-[22px] w-[88px] items-center self-start border-l-[5px] border-[#bbb] bg-[linear-gradient(90deg,#6c6c6c,#808080)] text-black">
                                    <span className="flex-1 text-center text-sm">FB</span>
                                    <span className="w-[39px] text-center text-[10px] leading-[11px]">
                                        Pure Signal2
                                    </span>
                                </div>
                            </div>
                            <div className="flex h-[27px] items-center pr-[7px] pl-2.5">
                                <span className="w-[55px] font-mono text-[10px]">Pan:</span>
                                <Slider label="Pan" value={21} className="w-[166px]" />
                                <Btn className="mr-2.5 ml-4 w-[47px]">Center</Btn>
                                <span className="w-11 font-mono text-[10px]">Zoom:</span>
                                <Slider label="Zoom" value={0} className="mr-auto w-[146px]" />
                                <div className="flex gap-1">
                                    {['ZTB', '0.5x', '1x', '2x', '4x'].map((zoom) => (
                                        <Btn key={zoom} className="w-[37px]">{zoom}</Btn>
                                    ))}
                                </div>
                            </div>
                            <div className="flex h-[175px] pl-[9px]">
                                <SplitPanel />
                                <DspPanel />
                                <TransmitPanel />
                            </div>
                        </main>
                        <RightColumn />
                    </div>
                    <StatusBar />
                </div>
            </div>
        </div>
    );
}
